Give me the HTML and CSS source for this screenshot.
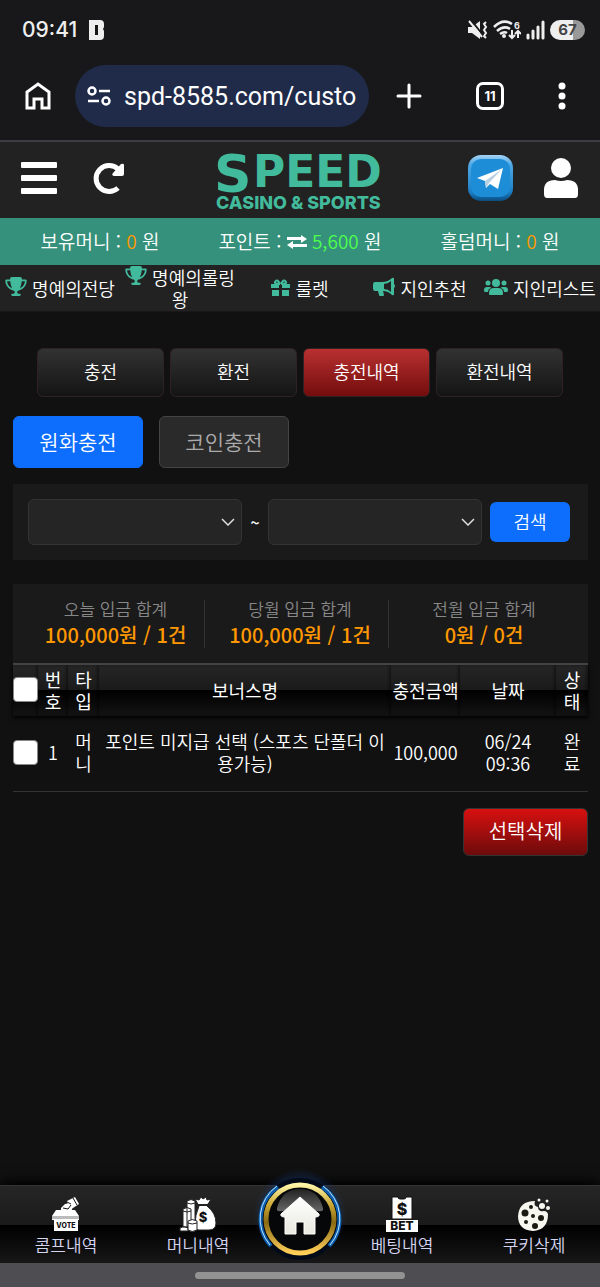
FILE: index.html
```
<!DOCTYPE html>
<html lang="ko">
<head>
    <meta charset="UTF-8">
    <meta name="viewport" content="width=device-width, initial-scale=1.0">
    <title>SPEED CASINO &amp; SPORTS</title>
    <link rel="stylesheet" href="styles.css">
</head>
<body>

<svg class="sprite" aria-hidden="true">
    <symbol id="trophy" viewBox="0 0 576 512"><path d="M400 0L176 0c-26.500 0-48.100 21.800-47.100 48.200c.2 5.300 .4 10.600 .7 15.800L24 64C10.700 64 0 74.700 0 88c0 92.600 33.500 157 78.500 200.700c44.300 43.100 98.300 64.800 138.100 75.800c23.400 6.500 39.400 26 39.400 45.600c0 20.900-17 37.900-37.900 37.900L192 448c-17.700 0-32 14.300-32 32s14.300 32 32 32l192 0c17.700 0 32-14.300 32-32s-14.300-32-32-32l-26.100 0C337 448 320 431 320 410.100c0-19.600 15.900-39.200 39.400-45.600c39.900-11 93.900-32.700 138.200-75.800C542.500 245 576 180.600 576 88c0-13.300-10.700-24-24-24L446.400 64c.3-5.200 .5-10.400 .7-15.800C448.100 21.800 426.500 0 400 0zM48.900 112l84.400 0c9.100 90.100 29.200 150.300 51.900 190.600c-24.900-11-50.800-26.500-73.200-48.300c-32-31.100-58-76-63-142.300zM464.100 254.300c-22.400 21.800-48.300 37.300-73.200 48.300c22.700-40.300 42.800-100.500 51.900-190.600l84.400 0c-5.100 66.300-31.100 111.200-63 142.300z"/></symbol>
</svg>

<div class="status">
    <span class="status__time">09:41</span>
    <svg width="16" height="20" viewBox="0 0 16 20"><path fill="#eee" fill-rule="evenodd" d="M0 0h11q4 0 4 4v3l-1 2 1 2v5q0 4-4 4H0zM6 5v10h3V5z"/></svg>
    <div class="status__icons">
        <svg width="20" height="20" viewBox="0 0 20 20"><path fill="#eee" d="M0 7h4l8-6v18l-8-6H0z"/><path stroke="#18181a" stroke-width="2" d="M3 0l11 14"/><path stroke="#eee" stroke-width="2" d="M1 1l13 16"/><path fill="none" stroke="#eee" stroke-width="2" d="M18 2l-2 2 2 3-2 3 2 3-2 3 2 2"/></svg>
        <svg width="28" height="20" viewBox="0 0 28 20"><g fill="none" stroke="#eee" stroke-width="2.500"><path d="M1 7q9-9 18-3M4 11q7-6 13-2M7 14q4-3 7-1"/><path stroke-width="2" d="M19 10v8m-3-3l3 3 3-3M25 18v-7m-3 3l3-3 3 3"/></g><circle cx="11" cy="16" r="2" fill="#eee"/><text x="21" y="9" class="mini">6</text></svg>
        <svg width="19" height="20" viewBox="0 0 19 20"><path stroke="#eee" stroke-width="3" stroke-linecap="round" d="M2 18v-3M7 18v-7M12 18V7M17 18V2"/></svg>
        <span class="battery">67</span>
    </div>
</div>

<div class="browser">
    <button class="icon-button" aria-label="홈 화면"><svg width="26" height="28" viewBox="0 0 26 28"><path fill="none" stroke="#fff" stroke-width="3" d="M2 26V10l11-8 11 8v16h-7v-9H9v9z"/></svg></button>
    <div class="browser__url">
        <svg width="24" height="20" viewBox="0 0 24 20"><g fill="none" stroke="#fff" stroke-width="2.500"><circle cx="5" cy="5" r="3.500"/><circle cx="19" cy="15" r="3.500"/><path d="M12 5h11M1 15h11"/></g></svg>
        <input class="browser__input" type="text" aria-label="주소" value="spd-8585.com/custo" readonly>
    </div>
    <div class="browser__tools">
        <button class="icon-button" aria-label="새 탭"><svg width="26" height="26" viewBox="0 0 26 26"><path stroke="#fff" stroke-width="3" stroke-linecap="round" d="M13 2v22M2 13h22"/></svg></button>
        <button class="tab-count">11</button>
        <button class="icon-button" aria-label="메뉴"><svg width="8" height="28" viewBox="0 0 8 28"><g fill="#fff"><circle cx="4" cy="4" r="3.500"/><circle cx="4" cy="14" r="3.500"/><circle cx="4" cy="24" r="3.500"/></g></svg></button>
    </div>
</div>

<header class="header">
    <div class="header__side">
        <button class="icon-button" aria-label="전체메뉴"><svg width="36" height="32" viewBox="0 0 36 32"><g fill="#fff"><rect width="36" height="6" rx="1"/><rect y="13" width="36" height="6" rx="1"/><rect y="26" width="36" height="6" rx="1"/></g></svg></button>
        <button class="icon-button" aria-label="새로고침"><svg width="32" height="32" viewBox="0 0 32 32"><path fill="none" stroke="#fff" stroke-width="5" d="M25 26A13 13 0 1 1 25 7"/><path fill="#fff" d="M31 3v9q0 2-2 2h-8q-3-1-1-3l8-9q3-1 3 1z"/></svg></button>
    </div>
    <a class="logo" href="#">
        <svg width="168" height="56" viewBox="0 0 168 56">
            <text x="-2" y="38" class="logo__initial">S</text>
            <text x="37" y="33" class="logo__name">PEED</text>
            <text x="0" y="55" class="logo__sub">CASINO &amp; SPORTS</text>
        </svg>
    </a>
    <div class="header__side header__side--right">
        <a href="#" aria-label="텔레그램"><svg width="47" height="48" viewBox="0 0 47 48">
            <defs>
                <linearGradient id="tg" x1="0" y1="0" x2="0" y2="1"><stop offset="0" stop-color="#a5d4f5"/><stop offset=".2" stop-color="#4fa9e6"/><stop offset=".8" stop-color="#1c7fc6"/><stop offset="1" stop-color="#0b4d80"/></linearGradient>
            </defs>
            <rect x="1" y="1" width="45" height="46" rx="13" fill="url(#tg)"/>
            <rect x="4" y="5" width="39" height="38" rx="10" fill="#1d8dd8"/>
            <path fill="#fff" d="M10 24l26-10-5 21-8-5-4 4-1-7z"/>
            <path fill="#b9d0e2" d="M18 27l17-12-13 14-3 5z"/>
        </svg></a>
        <button class="icon-button" aria-label="내 정보"><svg width="36" height="40" viewBox="0 0 36 40"><circle cx="18" cy="10" r="10" fill="#fff"/><path fill="#fff" d="M1 36V32q0-10 11-10 6 2 12 0 11 0 11 10v4q0 4-3 4H4q-3 0-3-4z"/></svg></button>
    </div>
</header>

<div class="wallet">
    <div>보유머니 : <span class="wallet__cash">0</span> 원</div>
    <div>포인트 : <svg class="wallet__swap" width="20" height="14" viewBox="0 0 20 14"><path fill="#fff" d="M0 2h14V0l6 4-6 4V5H0zM20 9H6V6l-6 4 6 4v-2h14z"/></svg> <span class="wallet__point">5,600</span> 원</div>
    <div>홀덤머니 : <span class="wallet__cash">0</span> 원</div>
</div>

<nav class="menu">
    <a href="#"><svg class="menu__icon" width="22" height="19"><use href="#trophy"/></svg> 명예의전당</a>
    <a href="#"><svg class="menu__icon" width="22" height="19"><use href="#trophy"/></svg> 명예의롤링왕</a>
    <a href="#"><svg class="menu__icon" width="19" height="17" viewBox="0 0 19 17"><path d="M0 5h8v4H0zM11 5h8v4h-8zM1 11h7v6H1zM11 11h7v6h-7z"/><path fill="none" stroke="#42ba9c" stroke-width="2" d="M9 5Q3 5 4 3q2-4 5 2m1 0q6 0 5-2-2-4-5 2"/></svg> 룰렛</a>
    <a href="#"><svg class="menu__icon" width="22" height="19" viewBox="0 0 22 19"><path fill-rule="evenodd" d="M2 5h7q6 0 10-4 2-1 2 1v5q2 2 0 4v6q0 2-2 1-4-4-9-4l1 4q0 1-1 1H7q-1 0-1-1l-1-4H2q-2 0-2-3V8q0-3 2-3zm9 2v5q4 0 7 3V4q-3 3-7 3z"/></svg> 지인추천</a>
    <a href="#"><svg class="menu__icon" width="24" height="18" viewBox="0 0 24 18"><circle cx="12" cy="5" r="4"/><circle cx="4" cy="5" r="2.500"/><circle cx="20" cy="5" r="2.500"/><path d="M5 15q0-5 5-5h4q5 0 5 5v1q0 1-1 1H6q-1 0-1-1zM0 12q0-3 3-3h3q1 0 1 1-3 1-3 4H1q-1 0-1-2zM24 12q0-3-3-3h-3q-1 0-1 1 3 1 3 4h3q1 0 1-2z"/></svg> 지인리스트</a>
</nav>

<main class="main">
    <div class="tabs">
        <a class="tabs__item" href="#">충전</a>
        <a class="tabs__item" href="#">환전</a>
        <a class="tabs__item tabs__item--active" href="#">충전내역</a>
        <a class="tabs__item" href="#">환전내역</a>
    </div>

    <div class="types">
        <button class="types__button types__button--active">원화충전</button>
        <button class="types__button">코인충전</button>
    </div>

    <form class="search">
        <select class="search__date" aria-label="시작일"><option></option></select>
        <span class="search__tilde">~</span>
        <select class="search__date" aria-label="종료일"><option></option></select>
        <button class="search__button" type="button">검색</button>
    </form>

    <div class="totals">
        <div class="totals__item">오늘 입금 합계<strong>100,000원 / 1건</strong></div>
        <div class="totals__item">당월 입금 합계<strong>100,000원 / 1건</strong></div>
        <div class="totals__item">전월 입금 합계<strong>0원 / 0건</strong></div>
    </div>

    <table class="history">
        <colgroup>
            <col class="col-check"><col class="col-no"><col class="col-type"><col><col class="col-amount"><col class="col-date"><col class="col-state">
        </colgroup>
        <thead>
            <tr>
                <th><input class="check" type="checkbox" aria-label="전체 선택"></th>
                <th>번호</th>
                <th>타입</th>
                <th>보너스명</th>
                <th>충전금액</th>
                <th>날짜</th>
                <th>상태</th>
            </tr>
        </thead>
        <tbody>
            <tr>
                <td><input class="check" type="checkbox" aria-label="1번 선택"></td>
                <td>1</td>
                <td>머니</td>
                <td class="history__bonus">포인트 미지급 선택 (스포츠 단폴더 이용가능)</td>
                <td>100,000</td>
                <td class="history__date">06/24 09:36</td>
                <td>완료</td>
            </tr>
        </tbody>
    </table>

    <button class="delete">선택삭제</button>
</main>

<nav class="bottom">
    <a class="bottom__item" href="#">
        <svg width="30" height="36" viewBox="0 0 30 36"><path fill="#fff" d="M10 12l4-4 6-1 2 4-2 5v4H10z"/><path fill="#fff" d="M16 5l8-4 4 7-6 4-5-2z"/><path fill="none" stroke="#111" d="M22 2l4 7M12 12l5 1 3-4M16 6l4 2"/><path fill="#fff" d="M5 14h5v4h10v-4h4l4 6v4H1v-4z"/><path fill="#bbb" d="M1 20h27v3H1z"/><path fill="#fff" d="M3 24h24v11H3z"/><text x="15" y="32" class="vote">VOTE</text></svg>
        콤프내역
    </a>
    <a class="bottom__item" href="#">
        <svg width="38" height="36" viewBox="0 0 38 36"><g fill="#fff" stroke="#222"><path d="M8 5q4-3 8 0v26H8zM4 13q4-3 8 0v18H4zM1 32q4-3 8 0v3H1z"/><path fill="none" d="M8 7q4 2 8 0M4 15q4 2 8 0"/><path d="M20 10l-4-7 4 1 2-3 2 2 3-2 1 3 4-1-4 7q9 7 9 17 0 7-7 7H20q-4 0-4-5 0-10 4-19z"/><path d="M9 25q4-3 9 0v9q-5 3-9 0z"/><path fill="none" d="M9 27q4 2 9 0"/><path fill="none" stroke-width="2" d="M19 9h9l4 3M28 9l5-1"/></g><text x="24" y="26" class="coin">$</text></svg>
        머니내역
    </a>
    <a class="bottom__item bottom__item--home" href="#" aria-label="홈">
        <svg class="bottom__home" width="100" height="100" viewBox="0 0 100 100">
            <defs>
                <linearGradient id="gold" x1="0" y1="0" x2="0" y2="1"><stop offset="0" stop-color="#fff6a6"/><stop offset=".3" stop-color="#c9a532"/><stop offset=".55" stop-color="#8a6b12"/><stop offset="1" stop-color="#ffcf58"/></linearGradient>
                <linearGradient id="gloss" x1="0" y1="0" x2="0" y2="1"><stop offset="0" stop-color="#222"/><stop offset="1" stop-color="#666"/></linearGradient>
                <linearGradient id="house" x1="0" y1="0" x2="0" y2="1"><stop offset="0" stop-color="#fff"/><stop offset="1" stop-color="#e9e9df"/></linearGradient>
                <radialGradient id="glow"><stop offset=".7" stop-color="#184a9c" stop-opacity=".4"/><stop offset="1" stop-color="#184a9c" stop-opacity="0"/></radialGradient>
            </defs>
            <circle cx="50" cy="46" r="46" fill="url(#glow)"/>
            <circle cx="50" cy="50" r="41" fill="#020a18"/>
            <path fill="none" stroke="#0d5fae" stroke-width="4" d="M21 77A39 39 0 0 1 28 18M72 18A39 39 0 0 1 79 77"/>
            <path fill="none" stroke="#bfe8ff" d="M20 76A40 40 0 0 1 27 17M73 17A40 40 0 0 1 80 76"/>
            <circle cx="50" cy="50" r="34" fill="#060708" stroke="url(#gold)" stroke-width="5"/>
            <path fill="url(#gloss)" d="M27 39Q32 20 50 20t23 19q1 4-5 3-18-4-36 0-6 1-5-3z"/>
            <path fill="url(#house)" stroke="#fff" stroke-linejoin="round" d="M50 28L31 45q-1 3 4 3v17h11V53h8v12h11V48q5 0 4-3z"/>
        </svg>
    </a>
    <a class="bottom__item" href="#">
        <svg width="34" height="36" viewBox="0 0 34 36"><path fill="#fff" stroke="#111" d="M7 1h6q0 2 2 2h4q2 0 2-2h6v22H7z"/><path fill="#fff" d="M1 24h32v12H1z"/><text x="17" y="19" class="coin coin--big">$</text><text x="17" y="34" class="bet">BET</text></svg>
        베팅내역
    </a>
    <a class="bottom__item" href="#">
        <svg width="34" height="36" viewBox="0 0 34 36"><path fill="#f7f7f0" d="M18 5q-2 5 3 6 0 5 6 4 3 0 4 3 0 16-15 17Q1 34 1 20 2 5 18 5z"/><g fill="#1a1a12"><circle cx="8" cy="17" r="3.500"/><circle cx="14" cy="11" r="2"/><circle cx="16" cy="20" r="2"/><circle cx="24" cy="22" r="3"/><circle cx="9" cy="26" r="2"/><circle cx="18" cy="30" r="3"/></g><g fill="#f7f7f0"><circle cx="25" cy="10" r="3"/><circle cx="22" cy="4" r="1.500"/><circle cx="30" cy="5" r="1.500"/><circle cx="31" cy="12" r="2"/></g></svg>
        쿠키삭제
    </a>
</nav>
<div class="gesture"></div>

</body>
</html>
```
FILE: styles.css
```
* {
    box-sizing: border-box;
}
body {
    margin: 0;
    min-height: 100vh;
    display: flex;
    flex-direction: column;
    background: #111;
    color: #fff;
    font-family: "Noto Sans CJK KR", sans-serif;
    font-size: 18px;
    font-weight: 350;
    line-height: 22px;
}
a {
    color: inherit;
    text-decoration: none;
}
button,
input,
select {
    font: inherit;
    color: inherit;
}
button {
    padding: 0;
    border: none;
    background: none;
    cursor: pointer;
}
svg {
    display: block;
    flex: none;
}
.sprite {
    position: absolute;
    width: 0;
    height: 0;
}
.icon-button {
    display: flex;
}

/* phone status bar */
.status {
    display: flex;
    align-items: center;
    gap: 12px;
    height: 60px;
    padding: 0 15px 0 22px;
    background: #18181a;
    font-family: Inter, sans-serif;
    font-weight: 500;
}
.status__time {
    font-size: 21px;
    color: #eee;
}
.status__icons {
    display: flex;
    align-items: center;
    gap: 5px;
    margin-left: auto;
}
.mini {
    fill: #eee;
    font-size: 9px;
    font-weight: 700;
}
.battery {
    width: 35px;
    border-radius: 10px;
    background: linear-gradient(90deg, #eee 67%, #999 67%);
    color: #444;
    font-size: 15px;
    font-weight: 700;
    line-height: 20px;
    text-align: center;
}

/* browser bar */
.browser {
    display: flex;
    align-items: center;
    gap: 24px;
    height: 82px;
    padding: 0 34px 8px 25px;
    background: #18181a;
    border-bottom: 2px solid #3d3d46;
}
.browser__url {
    flex: 1;
    min-width: 0;
    display: flex;
    align-items: center;
    gap: 13px;
    height: 62px;
    padding: 0 12px;
    border-radius: 31px;
    background: #1f2b49;
}
.browser__input {
    flex: 1;
    min-width: 0;
    padding: 0;
    border: none;
    outline: none;
    background: none;
    font-family: Roboto, sans-serif;
    font-size: 25px;
    font-weight: 400;
}
.browser__tools {
    display: flex;
    align-items: center;
    gap: 54px;
    padding-left: 3px;
}
.tab-count {
    width: 28px;
    height: 28px;
    border: 3px solid #fff;
    border-radius: 7px;
    font-family: Inter, sans-serif;
    font-size: 13px;
    font-weight: 700;
    line-height: 22px;
}

/* site header */
.header {
    display: flex;
    align-items: center;
    height: 76px;
    padding: 0 21px 4px;
    background: #222;
}
.header__side {
    flex: 1;
    display: flex;
    align-items: center;
    gap: 36px;
}
.header__side--right {
    justify-content: flex-end;
    gap: 29px;
}
.logo {
    padding-top: 8px;
}
.logo svg {
    overflow: visible;
    fill: #42ba9c;
}
.logo__initial,
.logo__name {
    font-family: "DejaVu Sans", sans-serif;
    font-weight: 700;
}
.logo__initial {
    font-size: 52px;
}
.logo__name {
    font-size: 44px;
}
.logo__sub {
    font-family: Inter, sans-serif;
    font-size: 18px;
    font-weight: 800;
}

.wallet {
    display: grid;
    grid-template-columns: repeat(3, 1fr);
    align-items: center;
    height: 47px;
    padding-bottom: 1px;
    background: #35917b;
    font-size: 19px;
    text-align: center;
}
.wallet__swap {
    display: inline-block;
}
.wallet__cash {
    color: #ff9800;
}
.wallet__point {
    color: #4dff4d;
}

.menu {
    display: grid;
    grid-template-columns: repeat(5, 1fr);
    align-items: center;
    min-height: 47px;
    padding-bottom: 1px;
    background: #222;
    border-bottom: 1px solid #1a1718;
    text-align: center;
}
.menu__icon {
    display: inline-block;
    fill: #42ba9c;
}

.main {
    flex: 1;
    padding: 36px 12px 36px 13px;
}
.tabs {
    display: grid;
    grid-template-columns: repeat(4, 1fr);
    gap: 6px;
    padding: 0 25px 0 24px;
}
.tabs__item {
    padding: 11px 0 13px;
    border: 1px solid #302224;
    border-radius: 6px;
    background: linear-gradient(#323232, #141414);
    line-height: 23px;
    text-align: center;
}
.tabs__item--active {
    background: linear-gradient(#b93030, #730d0d);
}

.types {
    display: flex;
    gap: 16px;
    margin: 19px 0 16px;
}
.types__button {
    width: 130px;
    height: 52px;
    padding-bottom: 2px;
    border: 1px solid #444;
    border-radius: 6px;
    background: #2a2a2a;
    color: #aaa;
    font-size: 21px;
}
.types__button--active {
    border-color: #0d6efd;
    background: #0d6efd;
    color: #fff;
}

.search {
    display: flex;
    align-items: center;
    gap: 8px;
    padding: 15px 18px 15px 15px;
    background: #1a1a1a;
}
.search__date {
    flex: 1;
    min-width: 0;
    height: 46px;
    border: 1px solid #333;
    border-radius: 6px;
    appearance: none;
    background: #252525 url("data:image/svg+xml,%3Csvg xmlns='http://www.w3.org/2000/svg' width='14' height='8'%3E%3Cpath d='M1 1l6 6 6-6' fill='none' stroke='%23ddd' stroke-width='1.500'/%3E%3C/svg%3E") no-repeat right 6px center;
}
.search__tilde {
    font-size: 16px;
    font-weight: 500;
}
.search__button {
    width: 80px;
    height: 40px;
    padding-bottom: 2px;
    border-radius: 6px;
    background: #0d6efd;
}

.totals {
    display: grid;
    grid-template-columns: repeat(3, 1fr);
    margin-top: 24px;
    padding: 16px 16px 15px 7px;
    background: #1a1a1a;
}
.totals__item {
    padding-left: 7px;
    color: #888;
    font-size: 17px;
    line-height: 17px;
    text-align: center;
}
.totals__item + .totals__item {
    border-left: 1px solid #333;
}
.totals__item strong {
    display: block;
    margin-top: 4px;
    color: #ff9800;
    font-size: 20px;
    font-weight: 500;
    line-height: 27px;
}

.history {
    width: 100%;
    table-layout: fixed;
    border-collapse: collapse;
    text-align: center;
}
.col-check {
    width: 25px;
}
.col-no {
    width: 30px;
}
.col-type {
    width: 31px;
}
.col-amount {
    width: 69px;
}
.col-date {
    width: 96px;
}
.col-state {
    width: 32px;
}
.history thead {
    box-shadow: 0 2px 4px #000;
}
.history th {
    height: 52px;
    padding: 0 0 2px;
    border-top: 2px solid #444;
    background: linear-gradient(#262626, #1a1a1a 50%, #000 50%, #141414);
    box-shadow: inset -2px 0 3px rgba(0, 0, 0, 0.4);
    font-weight: 400;
}
.history td {
    height: 75px;
    padding: 0 0 2px;
    border-bottom: 1px solid #333;
}
.history .history__bonus {
    padding: 0 3px 2px;
}
.history .history__date {
    padding: 0 12px 2px;
}
.check {
    display: block;
    width: 25px;
    height: 25px;
    margin: 0;
    appearance: none;
    border: 1px solid #888;
    border-radius: 4px;
    background: #fff;
}
.check:checked {
    background: #0d6efd;
}

.delete {
    display: block;
    width: 125px;
    height: 48px;
    margin: 16px 0 0 auto;
    padding-bottom: 1px;
    border: 1px solid #333;
    border-radius: 6px;
    background: linear-gradient(#d81010, #6d0b0b);
    font-size: 20px;
}

.bottom {
    display: grid;
    grid-template-columns: 1fr 1fr 72px 1fr 1fr;
    height: 78px;
    border-top: 1px solid #333;
    background: linear-gradient(#262626, #1a1a1a 50%, #000 50%, #171717);
    box-shadow: 0 -4px 12px #000;
    color: #d5d5f2;
}
.bottom__item {
    display: flex;
    flex-direction: column;
    align-items: center;
    padding-top: 10px;
    font-size: 17px;
    line-height: 26px;
}
.bottom__item--home {
    position: relative;
}
.bottom__home {
    position: absolute;
    top: -17px;
    left: 50%;
    transform: translateX(-50%);
}
.vote,
.bet,
.coin {
    fill: #111;
    font-family: Inter, sans-serif;
    font-weight: 800;
    text-anchor: middle;
}
.vote {
    font-size: 7px;
}
.bet {
    font-size: 12px;
}
.coin {
    font-size: 13px;
}
.coin--big {
    font-size: 16px;
}

.gesture {
    display: flex;
    justify-content: center;
    padding: 9px 0 8px;
    background: #4e4d52;
}
.gesture::before {
    content: "";
    width: 35%;
    height: 7px;
    border-radius: 4px;
    background: #929292;
}
```
